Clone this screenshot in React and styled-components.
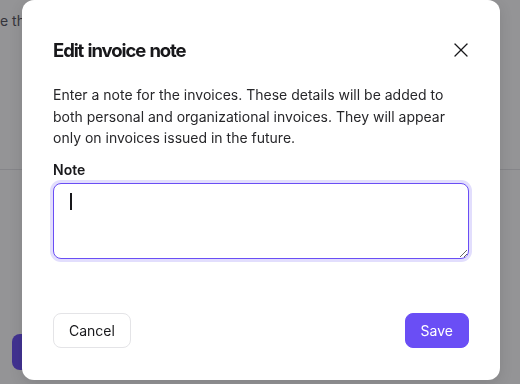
import styled, { createGlobalStyle } from "styled-components";

const GlobalStyle = createGlobalStyle`
  html, body {
    margin: 0;
    padding: 0;
    background: #ffffff;
    font-family: Inter, "Noto Sans", sans-serif;
    -webkit-font-smoothing: antialiased;
  }
  * {
    box-sizing: border-box;
  }
`;

const Page = styled.div`
  width: 520px;
  height: 384px;
  overflow: hidden;
`;

const PageText = styled.p`
  margin: 0;
  padding-top: 11px;
  font-size: 14px;
  line-height: 20px;
  color: #52525b;
  white-space: nowrap;
`;

const PageDivider = styled.hr`
  margin: 138px 0 0;
  border: none;
  border-top: 1px solid #e4e4e7;
`;

const PageButton = styled.div`
  margin: 164px 0 0 12px;
  width: 90px;
  height: 36px;
  border-radius: 8px;
  background: #6a4ef5;
`;

const Overlay = styled.div`
  position: fixed;
  inset: 0;
  background: rgba(17, 17, 22, 0.45);
  display: flex;
  align-items: flex-start;
  padding-left: 22px;
`;

const Modal = styled.div`
  width: 478px;
  height: 380px;
  background: #ffffff;
  border-radius: 12px;
  padding: 36px 31px 32px;
  display: flex;
  flex-direction: column;
  box-shadow: 0 4px 14px rgba(0, 0, 0, 0.12);
`;

const Header = styled.div`
  display: flex;
  align-items: center;
  justify-content: space-between;
`;

const Title = styled.h2`
  margin: 0;
  font-size: 18.5px;
  line-height: 28px;
  font-weight: 700;
  color: #18181b;
  letter-spacing: -1.1px;
  word-spacing: 1px;
`;

const CloseButton = styled.button`
  width: 24px;
  height: 24px;
  margin-right: -4px;
  padding: 0;
  border: none;
  background: none;
  color: #18181b;
  display: flex;
  align-items: center;
  justify-content: center;
  cursor: pointer;
`;

const Description = styled.p`
  margin: 20px 0 0;
  font-size: 14px;
  line-height: 21.5px;
  color: #27272a;
`;

const Label = styled.label`
  display: block;
  margin: 11px 0 3px;
  font-size: 14px;
  line-height: 20px;
  font-weight: 600;
  color: #18181b;
`;

const FieldWrap = styled.div`
  position: relative;
`;

const NoteInput = styled.textarea`
  display: block;
  width: 100%;
  height: 76px;
  padding: 8px 16px;
  border: 1px solid #6a4ef5;
  border-radius: 8px;
  box-shadow: 0 0 0 3px #e2defd;
  outline: none;
  font-family: inherit;
  font-size: 14px;
  line-height: 20px;
  color: #18181b;
  caret-color: transparent;
`;

const Caret = styled.span`
  position: absolute;
  left: 17px;
  top: 10px;
  width: 2px;
  height: 17px;
  background: #18181b;
`;

const Footer = styled.div`
  margin-top: auto;
  display: flex;
  justify-content: space-between;
`;

const Button = styled.button`
  height: 35px;
  padding: 0 15px;
  border-radius: 8px;
  font-family: inherit;
  font-size: 14px;
  font-weight: 400;
  cursor: pointer;
  border: 1px solid ${(p) => (p.$primary ? "#6a4ef5" : "#e4e4e7")};
  background: ${(p) => (p.$primary ? "#6a4ef5" : "#ffffff")};
  color: ${(p) => (p.$primary ? "#ffffff" : "#18181b")};
`;

export default function App() {
  return (
    <>
      <GlobalStyle />
      <Page>
        <PageText>e the billing details for your account</PageText>
        <PageDivider />
        <PageButton />
      </Page>
      <Overlay>
        <Modal role="dialog">
          <Header>
            <Title>Edit invoice note</Title>
            <CloseButton aria-label="Close">
              <svg
                width="24"
                height="24"
                viewBox="0 0 24 24"
                fill="none"
                stroke="currentColor"
                strokeWidth="1.3"
                strokeLinecap="round"
              >
                <path d="M18 6 6 18" />
                <path d="m6 6 12 12" />
              </svg>
            </CloseButton>
          </Header>
          <Description>
            Enter a note for the invoices. These details will be added to both
            personal and organizational invoices. They will appear only on
            invoices issued in the future.
          </Description>
          <Label htmlFor="note">Note</Label>
          <FieldWrap>
            <NoteInput id="note" />
            <Caret />
          </FieldWrap>
          <Footer>
            <Button>Cancel</Button>
            <Button $primary>Save</Button>
          </Footer>
        </Modal>
      </Overlay>
    </>
  );
}
